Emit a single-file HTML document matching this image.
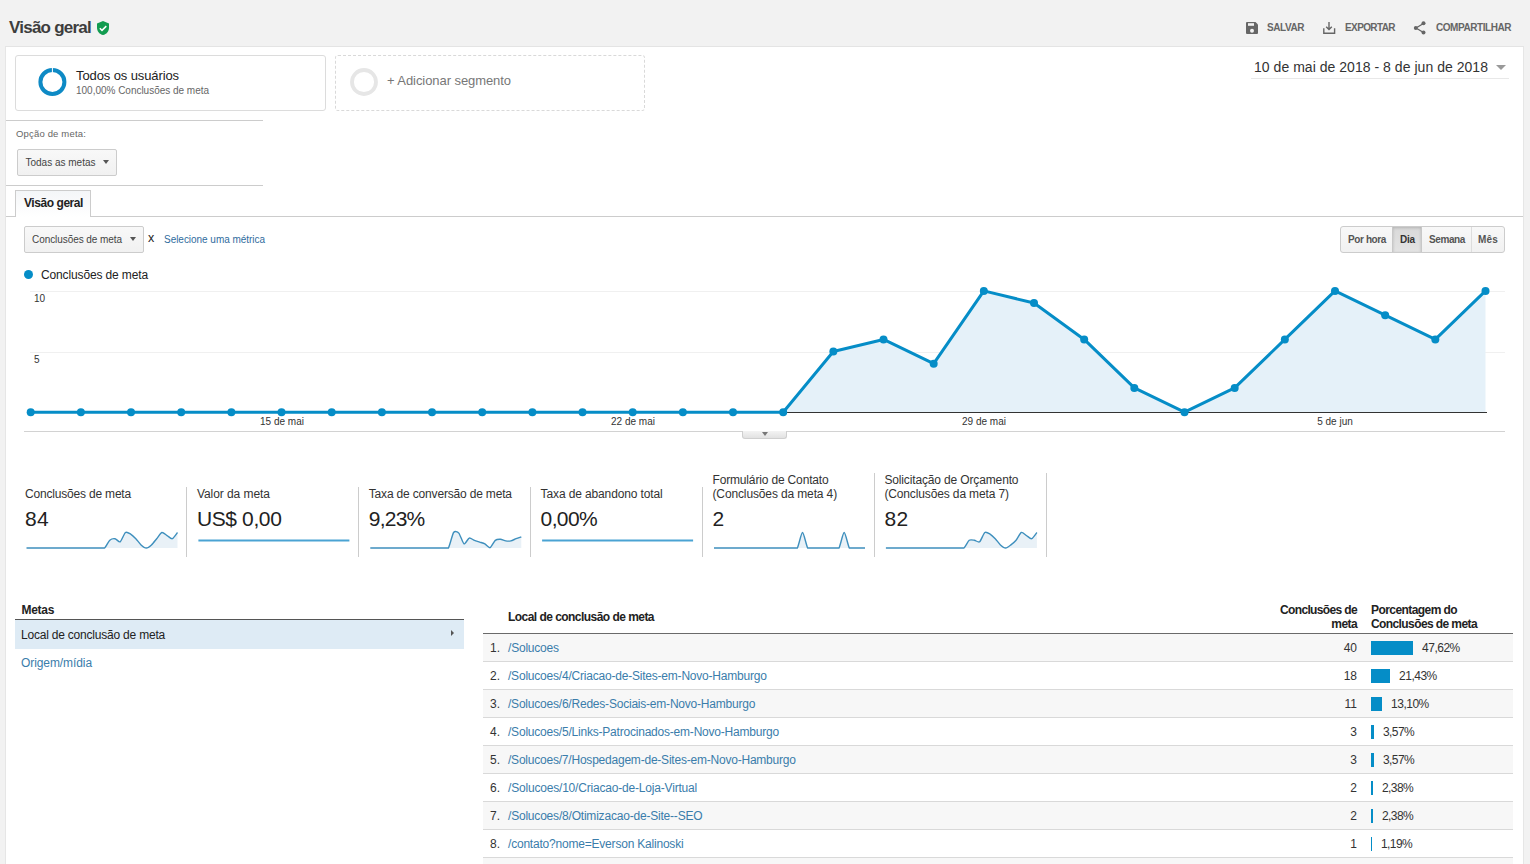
<!DOCTYPE html>
<html><head><meta charset="utf-8"><style>
html,body{margin:0;padding:0;}
body{width:1530px;height:864px;overflow:hidden;background:#f2f2f2;position:relative;font-family:'Liberation Sans',sans-serif;}
.t{position:absolute;white-space:nowrap;font-family:'Liberation Sans',sans-serif;}
.a{position:absolute;}
#panel{position:absolute;left:5px;top:46px;width:1517px;height:900px;background:#fff;border-left:1px solid #e6e6e6;border-top:1px solid #e4e4e4;border-right:1px solid #e6e6e6;}
.hl{position:absolute;height:1px;background:#ccc;}
.card{position:absolute;box-sizing:border-box;border:1px solid #dcdcdc;border-radius:3px;background:#fff;}
.btn{position:absolute;box-sizing:border-box;border:1px solid #ccc;border-radius:2px;background:linear-gradient(#f8f8f8,#f1f1f1);}
.tri{position:absolute;width:0;height:0;border-left:3.5px solid transparent;border-right:3.5px solid transparent;border-top:4px solid #555;}
.sep{position:absolute;width:1px;background:#ccc;}
.row{position:absolute;left:483px;width:1030px;height:27px;border-bottom:1px solid #d9d9d9;}
.bar{position:absolute;height:14px;background:#058dc7;}

</style></head><body>
<div id="panel"></div>
<!-- header icons -->
<svg class="a" style="left:1245px;top:21px" width="14" height="14" viewBox="0 0 14 14">
 <path d="M2 1h8.5l2.5 2.5V12a1 1 0 0 1-1 1H2a1 1 0 0 1-1-1V2a1 1 0 0 1 1-1z" fill="#666"/>
 <rect x="3" y="2.2" width="6" height="2.6" fill="#f2f2f2"/>
 <circle cx="7" cy="9.7" r="2" fill="#f2f2f2"/>
</svg>
<svg class="a" style="left:1321px;top:20px" width="16" height="16" viewBox="0 0 16 16">
 <path d="M8 2v7.6M5.2 6.8L8 9.6l2.8-2.8M2.8 8.2v5h10.8v-5" stroke="#666" stroke-width="1.4" fill="none"/>
</svg>
<svg class="a" style="left:1412px;top:20px" width="16" height="16" viewBox="0 0 16 16">
 <path d="M11.5 3.5L4 8l7.5 4.5" stroke="#666" stroke-width="1.3" fill="none"/>
 <circle cx="11.5" cy="3.3" r="2" fill="#666"/><circle cx="3.8" cy="8" r="2" fill="#666"/><circle cx="11.5" cy="12.6" r="2" fill="#666"/>
</svg>
<svg class="a" style="left:96px;top:20px" width="14" height="16" viewBox="0 0 14 16">
 <path d="M7 1L1 3.5v4.2c0 3.6 2.6 6.6 6 7.3 3.4-.7 6-3.7 6-7.3V3.5z" fill="#129c50"/>
 <path d="M3.8 8.2l2.2 2.2 4.3-4.3" stroke="#fff" stroke-width="1.5" fill="none"/>
</svg>

<!-- segment cards -->
<div class="card" style="left:15px;top:55px;width:311px;height:56px;"></div>
<svg class="a" style="left:36px;top:65px" width="32" height="32" viewBox="0 0 32 32">
 <circle cx="16.4" cy="17" r="12" stroke="#0e8ac5" stroke-width="4" fill="none"/>
 <rect x="15.9" y="2.5" width="1" height="5" fill="#fff"/>
</svg>
<div class="card" style="left:335px;top:55px;width:310px;height:56px;border:1px dashed #d9d9d9;"></div>
<svg class="a" style="left:348px;top:65px" width="32" height="32" viewBox="0 0 32 32">
 <circle cx="16" cy="17" r="12" stroke="#e6e6e6" stroke-width="3.8" fill="none"/>
</svg>

<!-- date -->
<div class="hl" style="left:1251px;top:78px;width:258px;background:#e8e8e8"></div>
<div class="tri" style="left:1496px;top:65px;border-left-width:5px;border-right-width:5px;border-top:5px solid #999"></div>

<!-- goal option -->
<div class="hl" style="left:6px;top:120px;width:257px;"></div>
<div class="btn" style="left:17px;top:149px;width:100px;height:27px;"></div>
<div class="tri" style="left:102.5px;top:160px;"></div>
<div class="hl" style="left:6px;top:185px;width:257px;"></div>
<div class="a" style="left:15px;top:190px;width:76px;height:27px;box-sizing:border-box;border:1px solid #ccc;border-bottom:none;background:linear-gradient(#f4f6f8,#fff)"></div>
<div class="hl" style="left:6px;top:216px;width:9px;"></div>
<div class="hl" style="left:91px;top:216px;width:1432px;"></div>

<!-- metric selector -->
<div class="btn" style="left:24px;top:226px;width:120px;height:27px;"></div>
<div class="tri" style="left:129.5px;top:237px;"></div>

<!-- button group -->
<div class="btn" style="left:1340px;top:226px;width:165px;height:27px;border-radius:3px"></div>
<div class="a" style="left:1392px;top:227px;width:30px;height:25px;background:linear-gradient(#d9d9d9,#e3e3e3);box-shadow:inset 0 1px 3px rgba(0,0,0,.18);border-left:1px solid #c8c8c8;border-right:1px solid #c8c8c8;box-sizing:border-box"></div>
<div class="sep" style="left:1471px;top:227px;height:25px;background:#ddd"></div>

<!-- legend dot -->
<div class="a" style="left:24px;top:270px;width:9px;height:9px;border-radius:50%;background:#058dc7"></div>

<!-- chart bottom line & expander -->
<div class="hl" style="left:24px;top:431px;width:1481px;background:#d2d2d2"></div>
<div class="a" style="left:742px;top:431px;width:45px;height:8px;box-sizing:border-box;border:1px solid #cfcfcf;border-top:none;border-radius:0 0 3px 3px;background:linear-gradient(#f3f3f3,#e2e2e2)"></div>
<div class="tri" style="left:761.5px;top:432px;border-top-color:#777;border-left-width:3.5px;border-right-width:3.5px;border-top-width:4px"></div>

<!-- metas left -->
<div class="a" style="left:15px;top:619px;width:449px;height:1px;background:#555"></div>
<div class="a" style="left:15px;top:620px;width:449px;height:29px;background:#deebf5"></div>
<div class="a" style="left:451px;top:630px;width:0;height:0;border-top:3px solid transparent;border-bottom:3px solid transparent;border-left:3.5px solid #555"></div>

<!-- right table header line -->
<div class="a" style="left:483px;top:633px;width:1030px;height:1px;background:#6a6a6a"></div>
<svg class="a" style="left:0;top:0" width="1530" height="864" viewBox="0 0 1530 864">
<line x1="30" y1="291.5" x2="1505" y2="291.5" stroke="#f0f0f0" stroke-width="1"/>
<line x1="30" y1="352.5" x2="1505" y2="352.5" stroke="#f0f0f0" stroke-width="1"/>
<path d="M30.7,412.2 L30.70,412.20 L80.87,412.20 L131.03,412.20 L181.20,412.20 L231.36,412.20 L281.53,412.20 L331.69,412.20 L381.86,412.20 L432.02,412.20 L482.19,412.20 L532.36,412.20 L582.52,412.20 L632.69,412.20 L682.85,412.20 L733.02,412.20 L783.18,412.20 L833.35,351.55 L883.51,339.42 L933.68,363.68 L983.84,290.90 L1034.01,303.03 L1084.18,339.42 L1134.34,387.94 L1184.51,412.20 L1234.67,387.94 L1284.84,339.42 L1335.00,290.90 L1385.17,315.16 L1435.33,339.42 L1485.50,290.90 L1485.5,412.2 Z" fill="#e5f1f9"/>
<line x1="30" y1="412.5" x2="1487" y2="412.5" stroke="#333" stroke-width="1"/>
<polyline points="30.70,412.20 80.87,412.20 131.03,412.20 181.20,412.20 231.36,412.20 281.53,412.20 331.69,412.20 381.86,412.20 432.02,412.20 482.19,412.20 532.36,412.20 582.52,412.20 632.69,412.20 682.85,412.20 733.02,412.20 783.18,412.20 833.35,351.55 883.51,339.42 933.68,363.68 983.84,290.90 1034.01,303.03 1084.18,339.42 1134.34,387.94 1184.51,412.20 1234.67,387.94 1284.84,339.42 1335.00,290.90 1385.17,315.16 1435.33,339.42 1485.50,290.90" fill="none" stroke="#058dc7" stroke-width="3" stroke-linejoin="round"/>
<circle cx="30.70" cy="412.20" r="4" fill="#058dc7"/>
<circle cx="80.87" cy="412.20" r="4" fill="#058dc7"/>
<circle cx="131.03" cy="412.20" r="4" fill="#058dc7"/>
<circle cx="181.20" cy="412.20" r="4" fill="#058dc7"/>
<circle cx="231.36" cy="412.20" r="4" fill="#058dc7"/>
<circle cx="281.53" cy="412.20" r="4" fill="#058dc7"/>
<circle cx="331.69" cy="412.20" r="4" fill="#058dc7"/>
<circle cx="381.86" cy="412.20" r="4" fill="#058dc7"/>
<circle cx="432.02" cy="412.20" r="4" fill="#058dc7"/>
<circle cx="482.19" cy="412.20" r="4" fill="#058dc7"/>
<circle cx="532.36" cy="412.20" r="4" fill="#058dc7"/>
<circle cx="582.52" cy="412.20" r="4" fill="#058dc7"/>
<circle cx="632.69" cy="412.20" r="4" fill="#058dc7"/>
<circle cx="682.85" cy="412.20" r="4" fill="#058dc7"/>
<circle cx="733.02" cy="412.20" r="4" fill="#058dc7"/>
<circle cx="783.18" cy="412.20" r="4" fill="#058dc7"/>
<circle cx="833.35" cy="351.55" r="4" fill="#058dc7"/>
<circle cx="883.51" cy="339.42" r="4" fill="#058dc7"/>
<circle cx="933.68" cy="363.68" r="4" fill="#058dc7"/>
<circle cx="983.84" cy="290.90" r="4" fill="#058dc7"/>
<circle cx="1034.01" cy="303.03" r="4" fill="#058dc7"/>
<circle cx="1084.18" cy="339.42" r="4" fill="#058dc7"/>
<circle cx="1134.34" cy="387.94" r="4" fill="#058dc7"/>
<circle cx="1184.51" cy="412.20" r="4" fill="#058dc7"/>
<circle cx="1234.67" cy="387.94" r="4" fill="#058dc7"/>
<circle cx="1284.84" cy="339.42" r="4" fill="#058dc7"/>
<circle cx="1335.00" cy="290.90" r="4" fill="#058dc7"/>
<circle cx="1385.17" cy="315.16" r="4" fill="#058dc7"/>
<circle cx="1435.33" cy="339.42" r="4" fill="#058dc7"/>
<circle cx="1485.50" cy="290.90" r="4" fill="#058dc7"/>
<path d="M26.50,548.00 L31.71,548.00 L36.91,548.00 L42.12,548.00 L47.33,548.00 L52.53,548.00 L57.74,548.00 L62.95,548.00 L68.16,548.00 L73.36,548.00 L78.57,548.00 L83.78,548.00 L88.98,548.00 L94.19,548.00 L99.40,548.00 L104.60,548.00 C105.85,547.07 108.56,541.37 109.81,540.25 C111.06,539.13 113.77,538.51 115.02,538.70 C116.27,538.89 118.97,542.54 120.22,541.80 C121.47,541.06 124.18,533.43 125.43,532.50 C126.68,531.57 129.39,533.31 130.64,534.05 C131.89,534.79 134.60,537.40 135.84,538.70 C137.09,540.00 139.80,543.78 141.05,544.90 C142.30,546.02 145.01,548.00 146.26,548.00 C147.51,548.00 150.22,546.02 151.47,544.90 C152.72,543.78 155.42,540.19 156.67,538.70 C157.92,537.21 160.63,532.87 161.88,532.50 C163.13,532.13 165.84,534.86 167.09,535.60 C168.34,536.34 171.04,539.07 172.29,538.70 C173.54,538.33 176.88,533.24 177.50,532.50 L177.5,548.0 L26.5,548.0 Z" fill="#e9f1f7"/>
<path d="M26.50,548.00 L31.71,548.00 L36.91,548.00 L42.12,548.00 L47.33,548.00 L52.53,548.00 L57.74,548.00 L62.95,548.00 L68.16,548.00 L73.36,548.00 L78.57,548.00 L83.78,548.00 L88.98,548.00 L94.19,548.00 L99.40,548.00 L104.60,548.00 C105.85,547.07 108.56,541.37 109.81,540.25 C111.06,539.13 113.77,538.51 115.02,538.70 C116.27,538.89 118.97,542.54 120.22,541.80 C121.47,541.06 124.18,533.43 125.43,532.50 C126.68,531.57 129.39,533.31 130.64,534.05 C131.89,534.79 134.60,537.40 135.84,538.70 C137.09,540.00 139.80,543.78 141.05,544.90 C142.30,546.02 145.01,548.00 146.26,548.00 C147.51,548.00 150.22,546.02 151.47,544.90 C152.72,543.78 155.42,540.19 156.67,538.70 C157.92,537.21 160.63,532.87 161.88,532.50 C163.13,532.13 165.84,534.86 167.09,535.60 C168.34,536.34 171.04,539.07 172.29,538.70 C173.54,538.33 176.88,533.24 177.50,532.50" fill="none" stroke="#3e8fbd" stroke-width="1.4" stroke-linejoin="round"/>
<line x1="198.4" y1="540.5" x2="349.4" y2="540.5" stroke="#4aa3d3" stroke-width="2"/>
<path d="M370.30,548.00 L375.51,548.00 L380.71,548.00 L385.92,548.00 L391.13,548.00 L396.33,548.00 L401.54,548.00 L406.75,548.00 L411.96,548.00 L417.16,548.00 L422.37,548.00 L427.58,548.00 L432.78,548.00 L437.99,548.00 L443.20,548.00 L448.40,548.00 C449.65,546.14 452.36,534.29 453.61,532.50 C454.86,530.71 457.57,531.76 458.82,533.12 C460.07,534.48 462.77,543.22 464.02,543.82 C465.27,544.41 467.98,538.49 469.23,538.08 C470.48,537.67 473.19,539.92 474.44,540.40 C475.69,540.89 478.40,541.70 479.64,542.11 C480.89,542.52 483.60,543.15 484.85,543.82 C486.10,544.48 488.81,548.00 490.06,547.69 C491.31,547.28 494.02,541.41 495.27,540.40 C496.52,539.40 499.22,539.26 500.47,539.32 C501.72,539.38 504.43,540.68 505.68,540.87 C506.93,541.06 509.64,541.13 510.89,540.87 C512.14,540.61 514.84,539.17 516.09,538.70 C517.34,538.24 520.68,537.20 521.30,537.00 L521.3,548.0 L370.3,548.0 Z" fill="#e9f1f7"/>
<path d="M370.30,548.00 L375.51,548.00 L380.71,548.00 L385.92,548.00 L391.13,548.00 L396.33,548.00 L401.54,548.00 L406.75,548.00 L411.96,548.00 L417.16,548.00 L422.37,548.00 L427.58,548.00 L432.78,548.00 L437.99,548.00 L443.20,548.00 L448.40,548.00 C449.65,546.14 452.36,534.29 453.61,532.50 C454.86,530.71 457.57,531.76 458.82,533.12 C460.07,534.48 462.77,543.22 464.02,543.82 C465.27,544.41 467.98,538.49 469.23,538.08 C470.48,537.67 473.19,539.92 474.44,540.40 C475.69,540.89 478.40,541.70 479.64,542.11 C480.89,542.52 483.60,543.15 484.85,543.82 C486.10,544.48 488.81,548.00 490.06,547.69 C491.31,547.28 494.02,541.41 495.27,540.40 C496.52,539.40 499.22,539.26 500.47,539.32 C501.72,539.38 504.43,540.68 505.68,540.87 C506.93,541.06 509.64,541.13 510.89,540.87 C512.14,540.61 514.84,539.17 516.09,538.70 C517.34,538.24 520.68,537.20 521.30,537.00" fill="none" stroke="#3e8fbd" stroke-width="1.4" stroke-linejoin="round"/>
<line x1="542.1" y1="540.5" x2="693.1" y2="540.5" stroke="#4aa3d3" stroke-width="2"/>
<path d="M714.00,548.00 L719.21,548.00 L724.41,548.00 L729.62,548.00 L734.83,548.00 L740.03,548.00 L745.24,548.00 L750.45,548.00 L755.66,548.00 L760.86,548.00 L766.07,548.00 L771.28,548.00 L776.48,548.00 L781.69,548.00 L786.90,548.00 L792.10,548.00 L797.31,548.00 C798.56,546.14 801.27,532.50 802.52,532.50 C803.77,532.50 806.47,546.14 807.72,548.00 L812.93,548.00 L818.14,548.00 L823.34,548.00 L828.55,548.00 L833.76,548.00 L838.97,548.00 C840.22,546.14 842.92,532.50 844.17,532.50 C845.42,532.50 848.13,546.14 849.38,548.00 L854.59,548.00 L859.79,548.00 L865.00,548.00 L865.0,548.0 L714.0,548.0 Z" fill="#e9f1f7"/>
<path d="M714.00,548.00 L719.21,548.00 L724.41,548.00 L729.62,548.00 L734.83,548.00 L740.03,548.00 L745.24,548.00 L750.45,548.00 L755.66,548.00 L760.86,548.00 L766.07,548.00 L771.28,548.00 L776.48,548.00 L781.69,548.00 L786.90,548.00 L792.10,548.00 L797.31,548.00 C798.56,546.14 801.27,532.50 802.52,532.50 C803.77,532.50 806.47,546.14 807.72,548.00 L812.93,548.00 L818.14,548.00 L823.34,548.00 L828.55,548.00 L833.76,548.00 L838.97,548.00 C840.22,546.14 842.92,532.50 844.17,532.50 C845.42,532.50 848.13,546.14 849.38,548.00 L854.59,548.00 L859.79,548.00 L865.00,548.00" fill="none" stroke="#3e8fbd" stroke-width="1.4" stroke-linejoin="round"/>
<path d="M885.90,548.00 L891.11,548.00 L896.31,548.00 L901.52,548.00 L906.73,548.00 L911.93,548.00 L917.14,548.00 L922.35,548.00 L927.56,548.00 L932.76,548.00 L937.97,548.00 L943.18,548.00 L948.38,548.00 L953.59,548.00 L958.80,548.00 L964.00,548.00 C965.25,547.07 967.96,541.18 969.21,540.25 C970.46,539.32 973.17,540.06 974.42,540.25 C975.67,540.44 978.37,542.73 979.62,541.80 C980.87,540.87 983.58,533.43 984.83,532.50 C986.08,531.57 988.79,533.31 990.04,534.05 C991.29,534.79 994.00,537.40 995.24,538.70 C996.49,540.00 999.20,543.78 1000.45,544.90 C1001.70,546.02 1004.41,548.00 1005.66,548.00 C1006.91,548.00 1009.62,545.83 1010.87,544.90 C1012.12,543.97 1014.82,541.74 1016.07,540.25 C1017.32,538.76 1020.03,533.06 1021.28,532.50 C1022.53,531.94 1025.24,534.86 1026.49,535.60 C1027.74,536.34 1030.44,539.07 1031.69,538.70 C1032.94,538.33 1036.28,533.24 1036.90,532.50 L1036.9,548.0 L885.9,548.0 Z" fill="#e9f1f7"/>
<path d="M885.90,548.00 L891.11,548.00 L896.31,548.00 L901.52,548.00 L906.73,548.00 L911.93,548.00 L917.14,548.00 L922.35,548.00 L927.56,548.00 L932.76,548.00 L937.97,548.00 L943.18,548.00 L948.38,548.00 L953.59,548.00 L958.80,548.00 L964.00,548.00 C965.25,547.07 967.96,541.18 969.21,540.25 C970.46,539.32 973.17,540.06 974.42,540.25 C975.67,540.44 978.37,542.73 979.62,541.80 C980.87,540.87 983.58,533.43 984.83,532.50 C986.08,531.57 988.79,533.31 990.04,534.05 C991.29,534.79 994.00,537.40 995.24,538.70 C996.49,540.00 999.20,543.78 1000.45,544.90 C1001.70,546.02 1004.41,548.00 1005.66,548.00 C1006.91,548.00 1009.62,545.83 1010.87,544.90 C1012.12,543.97 1014.82,541.74 1016.07,540.25 C1017.32,538.76 1020.03,533.06 1021.28,532.50 C1022.53,531.94 1025.24,534.86 1026.49,535.60 C1027.74,536.34 1030.44,539.07 1031.69,538.70 C1032.94,538.33 1036.28,533.24 1036.90,532.50" fill="none" stroke="#3e8fbd" stroke-width="1.4" stroke-linejoin="round"/>
</svg>
<div class="sep" style="left:186px;top:487px;height:70px"></div>
<div class="sep" style="left:358px;top:487px;height:70px"></div>
<div class="sep" style="left:530px;top:487px;height:70px"></div>
<div class="sep" style="left:702px;top:487px;height:70px"></div>
<div class="sep" style="left:874px;top:473px;height:84px"></div>
<div class="sep" style="left:1046px;top:473px;height:84px"></div>
<div class="row" style="top:634px;background:#f7f7f7"></div>
<div class="bar" style="left:1371px;top:641px;width:42px"></div>
<div class="row" style="top:662px;background:#fff"></div>
<div class="bar" style="left:1371px;top:669px;width:19px"></div>
<div class="row" style="top:690px;background:#f7f7f7"></div>
<div class="bar" style="left:1371px;top:697px;width:11px"></div>
<div class="row" style="top:718px;background:#fff"></div>
<div class="bar" style="left:1371px;top:725px;width:3px"></div>
<div class="row" style="top:746px;background:#f7f7f7"></div>
<div class="bar" style="left:1371px;top:753px;width:3px"></div>
<div class="row" style="top:774px;background:#fff"></div>
<div class="bar" style="left:1371px;top:781px;width:2px"></div>
<div class="row" style="top:802px;background:#f7f7f7"></div>
<div class="bar" style="left:1371px;top:809px;width:2px"></div>
<div class="row" style="top:830px;background:#fff"></div>
<div class="bar" style="left:1371px;top:837px;width:1px"></div>
<div class="row" style="top:858px;background:#f7f7f7"></div>
<div class="t" id="t0" style="top:18.72px;font-size:17px;line-height:17px;font-weight:700;color:#3d3d3d;letter-spacing:-0.764px;left:9px;">Visão geral</div>
<div class="t" id="t1" style="top:22.60px;font-size:10px;line-height:10px;font-weight:700;color:#666;letter-spacing:-0.440px;left:1267px;">SALVAR</div>
<div class="t" id="t2" style="top:22.60px;font-size:10px;line-height:10px;font-weight:700;color:#666;letter-spacing:-0.604px;left:1345px;">EXPORTAR</div>
<div class="t" id="t3" style="top:22.60px;font-size:10px;line-height:10px;font-weight:700;color:#666;letter-spacing:-0.448px;left:1436px;">COMPARTILHAR</div>
<div class="t" id="t4" style="top:69.08px;font-size:13px;line-height:13px;font-weight:400;color:#222;letter-spacing:-0.105px;left:76px;">Todos os usuários</div>
<div class="t" id="t5" style="top:86.10px;font-size:10px;line-height:10px;font-weight:400;color:#666;letter-spacing:-0.016px;left:76px;">100,00% Conclusões de meta</div>
<div class="t" id="t6" style="top:74.08px;font-size:13px;line-height:13px;font-weight:400;color:#777;letter-spacing:-0.070px;left:387px;">+ Adicionar segmento</div>
<div class="t" id="t7" style="top:60.24px;font-size:14px;line-height:14px;font-weight:400;color:#333;letter-spacing:0.035px;left:1254px;">10 de mai de 2018 - 8 de jun de 2018</div>
<div class="t" id="t8" style="top:129.02px;font-size:9.5px;line-height:9.5px;font-weight:400;color:#666;letter-spacing:0.171px;left:16px;">Opção de meta:</div>
<div class="t" id="t9" style="top:158.20px;font-size:10px;line-height:10px;font-weight:400;color:#444;letter-spacing:-0.003px;left:25.5px;">Todas as metas</div>
<div class="t" id="t10" style="top:196.92px;font-size:12px;line-height:12px;font-weight:700;color:#222;letter-spacing:-0.439px;left:24px;">Visão geral</div>
<div class="t" id="t11" style="top:234.60px;font-size:10px;line-height:10px;font-weight:400;color:#444;letter-spacing:-0.065px;left:32px;">Conclusões de meta</div>
<div class="t" id="t12" style="top:231.50px;font-size:12.5px;line-height:12.5px;font-weight:400;color:#222;left:148px;">x</div>
<div class="t" id="t13" style="top:234.60px;font-size:10px;line-height:10px;font-weight:400;color:#2f6c9e;letter-spacing:-0.034px;left:164px;">Selecione uma métrica</div>
<div class="t" id="t14" style="top:234.60px;font-size:10px;line-height:10px;font-weight:700;color:#555;letter-spacing:-0.391px;left:1348px;">Por hora</div>
<div class="t" id="t15" style="top:234.60px;font-size:10px;line-height:10px;font-weight:700;color:#333;letter-spacing:-0.188px;left:1400px;">Dia</div>
<div class="t" id="t16" style="top:234.60px;font-size:10px;line-height:10px;font-weight:700;color:#555;letter-spacing:-0.393px;left:1429px;">Semana</div>
<div class="t" id="t17" style="top:234.60px;font-size:10px;line-height:10px;font-weight:700;color:#555;letter-spacing:0.182px;left:1478px;">Mês</div>
<div class="t" id="t18" style="top:268.92px;font-size:12px;line-height:12px;font-weight:400;color:#222;letter-spacing:-0.134px;left:41px;">Conclusões de meta</div>
<div class="t" id="t19" style="top:293.60px;font-size:10px;line-height:10px;font-weight:400;color:#333;left:34px;">10</div>
<div class="t" id="t20" style="top:354.60px;font-size:10px;line-height:10px;font-weight:400;color:#333;left:34px;">5</div>
<div class="t" id="t21" style="top:416.60px;font-size:10px;line-height:10px;font-weight:400;color:#333;left:282px;transform:translateX(-50%);">15 de mai</div>
<div class="t" id="t22" style="top:416.60px;font-size:10px;line-height:10px;font-weight:400;color:#333;left:633px;transform:translateX(-50%);">22 de mai</div>
<div class="t" id="t23" style="top:416.60px;font-size:10px;line-height:10px;font-weight:400;color:#333;left:984px;transform:translateX(-50%);">29 de mai</div>
<div class="t" id="t24" style="top:416.60px;font-size:10px;line-height:10px;font-weight:400;color:#333;left:1335px;transform:translateX(-50%);">5 de jun</div>
<div class="t" id="t25" style="top:603.92px;font-size:12px;line-height:12px;font-weight:700;color:#222;letter-spacing:-0.303px;left:21.5px;">Metas</div>
<div class="t" id="t26" style="top:628.92px;font-size:12px;line-height:12px;font-weight:400;color:#222;letter-spacing:-0.209px;left:21px;">Local de conclusão de meta</div>
<div class="t" id="t27" style="top:656.92px;font-size:12px;line-height:12px;font-weight:400;color:#3a7dab;letter-spacing:-0.086px;left:21px;">Origem/mídia</div>
<div class="t" id="t28" style="top:610.92px;font-size:12px;line-height:12px;font-weight:700;color:#222;letter-spacing:-0.541px;left:508px;">Local de conclusão de meta</div>
<div class="t" id="t29" style="top:603.92px;font-size:12px;line-height:12px;font-weight:700;color:#222;letter-spacing:-0.643px;right:173px;">Conclusões de</div>
<div class="t" id="t30" style="top:617.92px;font-size:12px;line-height:12px;font-weight:700;color:#222;letter-spacing:-0.595px;right:173px;">meta</div>
<div class="t" id="t31" style="top:603.92px;font-size:12px;line-height:12px;font-weight:700;color:#222;letter-spacing:-0.571px;left:1371px;">Porcentagem do</div>
<div class="t" id="t32" style="top:617.92px;font-size:12px;line-height:12px;font-weight:700;color:#222;letter-spacing:-0.595px;left:1371px;">Conclusões de meta</div>
<div class="t" id="t33" style="top:487.92px;font-size:12px;line-height:12px;font-weight:400;color:#333;letter-spacing:-0.189px;left:25px;">Conclusões de meta</div>
<div class="t" id="t34" style="top:508.36px;font-size:21px;line-height:21px;font-weight:400;color:#222;letter-spacing:0.320px;left:25px;">84</div>
<div class="t" id="t35" style="top:487.92px;font-size:12px;line-height:12px;font-weight:400;color:#333;letter-spacing:-0.064px;left:196.9px;">Valor da meta</div>
<div class="t" id="t36" style="top:508.36px;font-size:21px;line-height:21px;font-weight:400;color:#222;letter-spacing:-0.370px;left:196.9px;">US$ 0,00</div>
<div class="t" id="t37" style="top:487.92px;font-size:12px;line-height:12px;font-weight:400;color:#333;letter-spacing:-0.177px;left:368.8px;">Taxa de conversão de meta</div>
<div class="t" id="t38" style="top:508.36px;font-size:21px;line-height:21px;font-weight:400;color:#222;letter-spacing:-0.769px;left:368.8px;">9,23%</div>
<div class="t" id="t39" style="top:487.92px;font-size:12px;line-height:12px;font-weight:400;color:#333;letter-spacing:-0.126px;left:540.6px;">Taxa de abandono total</div>
<div class="t" id="t40" style="top:508.36px;font-size:21px;line-height:21px;font-weight:400;color:#222;letter-spacing:-0.629px;left:540.6px;">0,00%</div>
<div class="t" id="t41" style="top:473.92px;font-size:12px;line-height:12px;font-weight:400;color:#333;letter-spacing:-0.161px;left:712.5px;">Formulário de Contato</div>
<div class="t" id="t42" style="top:487.92px;font-size:12px;line-height:12px;font-weight:400;color:#333;letter-spacing:-0.132px;left:712.5px;">(Conclusões da meta 4)</div>
<div class="t" id="t43" style="top:508.36px;font-size:21px;line-height:21px;font-weight:400;color:#222;letter-spacing:0.812px;left:712.5px;">2</div>
<div class="t" id="t44" style="top:473.92px;font-size:12px;line-height:12px;font-weight:400;color:#333;letter-spacing:-0.142px;left:884.4px;">Solicitação de Orçamento</div>
<div class="t" id="t45" style="top:487.92px;font-size:12px;line-height:12px;font-weight:400;color:#333;letter-spacing:-0.132px;left:884.4px;">(Conclusões da meta 7)</div>
<div class="t" id="t46" style="top:508.36px;font-size:21px;line-height:21px;font-weight:400;color:#222;letter-spacing:0.470px;left:884.4px;">82</div>
<div class="t" id="t47" style="top:641.92px;font-size:12px;line-height:12px;font-weight:400;color:#333;left:490px;">1.</div>
<div class="t" id="t48" style="top:641.92px;font-size:12px;line-height:12px;font-weight:400;color:#3a7dab;letter-spacing:-0.205px;left:508px;">/Solucoes</div>
<div class="t" id="t49" style="top:641.92px;font-size:12px;line-height:12px;font-weight:400;color:#333;right:173px;">40</div>
<div class="t" id="t50" style="top:641.92px;font-size:12px;line-height:12px;font-weight:400;color:#333;letter-spacing:-0.482px;left:1422px;">47,62%</div>
<div class="t" id="t51" style="top:669.92px;font-size:12px;line-height:12px;font-weight:400;color:#333;left:490px;">2.</div>
<div class="t" id="t52" style="top:669.92px;font-size:12px;line-height:12px;font-weight:400;color:#3a7dab;letter-spacing:-0.209px;left:508px;">/Solucoes/4/Criacao-de-Sites-em-Novo-Hamburgo</div>
<div class="t" id="t53" style="top:669.92px;font-size:12px;line-height:12px;font-weight:400;color:#333;right:173px;">18</div>
<div class="t" id="t54" style="top:669.92px;font-size:12px;line-height:12px;font-weight:400;color:#333;letter-spacing:-0.482px;left:1399px;">21,43%</div>
<div class="t" id="t55" style="top:697.92px;font-size:12px;line-height:12px;font-weight:400;color:#333;left:490px;">3.</div>
<div class="t" id="t56" style="top:697.92px;font-size:12px;line-height:12px;font-weight:400;color:#3a7dab;letter-spacing:-0.213px;left:508px;">/Solucoes/6/Redes-Sociais-em-Novo-Hamburgo</div>
<div class="t" id="t57" style="top:697.92px;font-size:12px;line-height:12px;font-weight:400;color:#333;right:173px;">11</div>
<div class="t" id="t58" style="top:697.92px;font-size:12px;line-height:12px;font-weight:400;color:#333;letter-spacing:-0.482px;left:1391px;">13,10%</div>
<div class="t" id="t59" style="top:725.92px;font-size:12px;line-height:12px;font-weight:400;color:#333;left:490px;">4.</div>
<div class="t" id="t60" style="top:725.92px;font-size:12px;line-height:12px;font-weight:400;color:#3a7dab;letter-spacing:-0.209px;left:508px;">/Solucoes/5/Links-Patrocinados-em-Novo-Hamburgo</div>
<div class="t" id="t61" style="top:725.92px;font-size:12px;line-height:12px;font-weight:400;color:#333;right:173px;">3</div>
<div class="t" id="t62" style="top:725.92px;font-size:12px;line-height:12px;font-weight:400;color:#333;letter-spacing:-0.578px;left:1383px;">3,57%</div>
<div class="t" id="t63" style="top:753.92px;font-size:12px;line-height:12px;font-weight:400;color:#333;left:490px;">5.</div>
<div class="t" id="t64" style="top:753.92px;font-size:12px;line-height:12px;font-weight:400;color:#3a7dab;letter-spacing:-0.217px;left:508px;">/Solucoes/7/Hospedagem-de-Sites-em-Novo-Hamburgo</div>
<div class="t" id="t65" style="top:753.92px;font-size:12px;line-height:12px;font-weight:400;color:#333;right:173px;">3</div>
<div class="t" id="t66" style="top:753.92px;font-size:12px;line-height:12px;font-weight:400;color:#333;letter-spacing:-0.578px;left:1383px;">3,57%</div>
<div class="t" id="t67" style="top:781.92px;font-size:12px;line-height:12px;font-weight:400;color:#333;left:490px;">6.</div>
<div class="t" id="t68" style="top:781.92px;font-size:12px;line-height:12px;font-weight:400;color:#3a7dab;letter-spacing:-0.190px;left:508px;">/Solucoes/10/Criacao-de-Loja-Virtual</div>
<div class="t" id="t69" style="top:781.92px;font-size:12px;line-height:12px;font-weight:400;color:#333;right:173px;">2</div>
<div class="t" id="t70" style="top:781.92px;font-size:12px;line-height:12px;font-weight:400;color:#333;letter-spacing:-0.578px;left:1382px;">2,38%</div>
<div class="t" id="t71" style="top:809.92px;font-size:12px;line-height:12px;font-weight:400;color:#333;left:490px;">7.</div>
<div class="t" id="t72" style="top:809.92px;font-size:12px;line-height:12px;font-weight:400;color:#3a7dab;letter-spacing:-0.201px;left:508px;">/Solucoes/8/Otimizacao-de-Site--SEO</div>
<div class="t" id="t73" style="top:809.92px;font-size:12px;line-height:12px;font-weight:400;color:#333;right:173px;">2</div>
<div class="t" id="t74" style="top:809.92px;font-size:12px;line-height:12px;font-weight:400;color:#333;letter-spacing:-0.578px;left:1382px;">2,38%</div>
<div class="t" id="t75" style="top:837.92px;font-size:12px;line-height:12px;font-weight:400;color:#333;left:490px;">8.</div>
<div class="t" id="t76" style="top:837.92px;font-size:12px;line-height:12px;font-weight:400;color:#3a7dab;letter-spacing:-0.205px;left:508px;">/contato?nome=Everson Kalinoski</div>
<div class="t" id="t77" style="top:837.92px;font-size:12px;line-height:12px;font-weight:400;color:#333;right:173px;">1</div>
<div class="t" id="t78" style="top:837.92px;font-size:12px;line-height:12px;font-weight:400;color:#333;letter-spacing:-0.578px;left:1381px;">1,19%</div>
</body></html>
